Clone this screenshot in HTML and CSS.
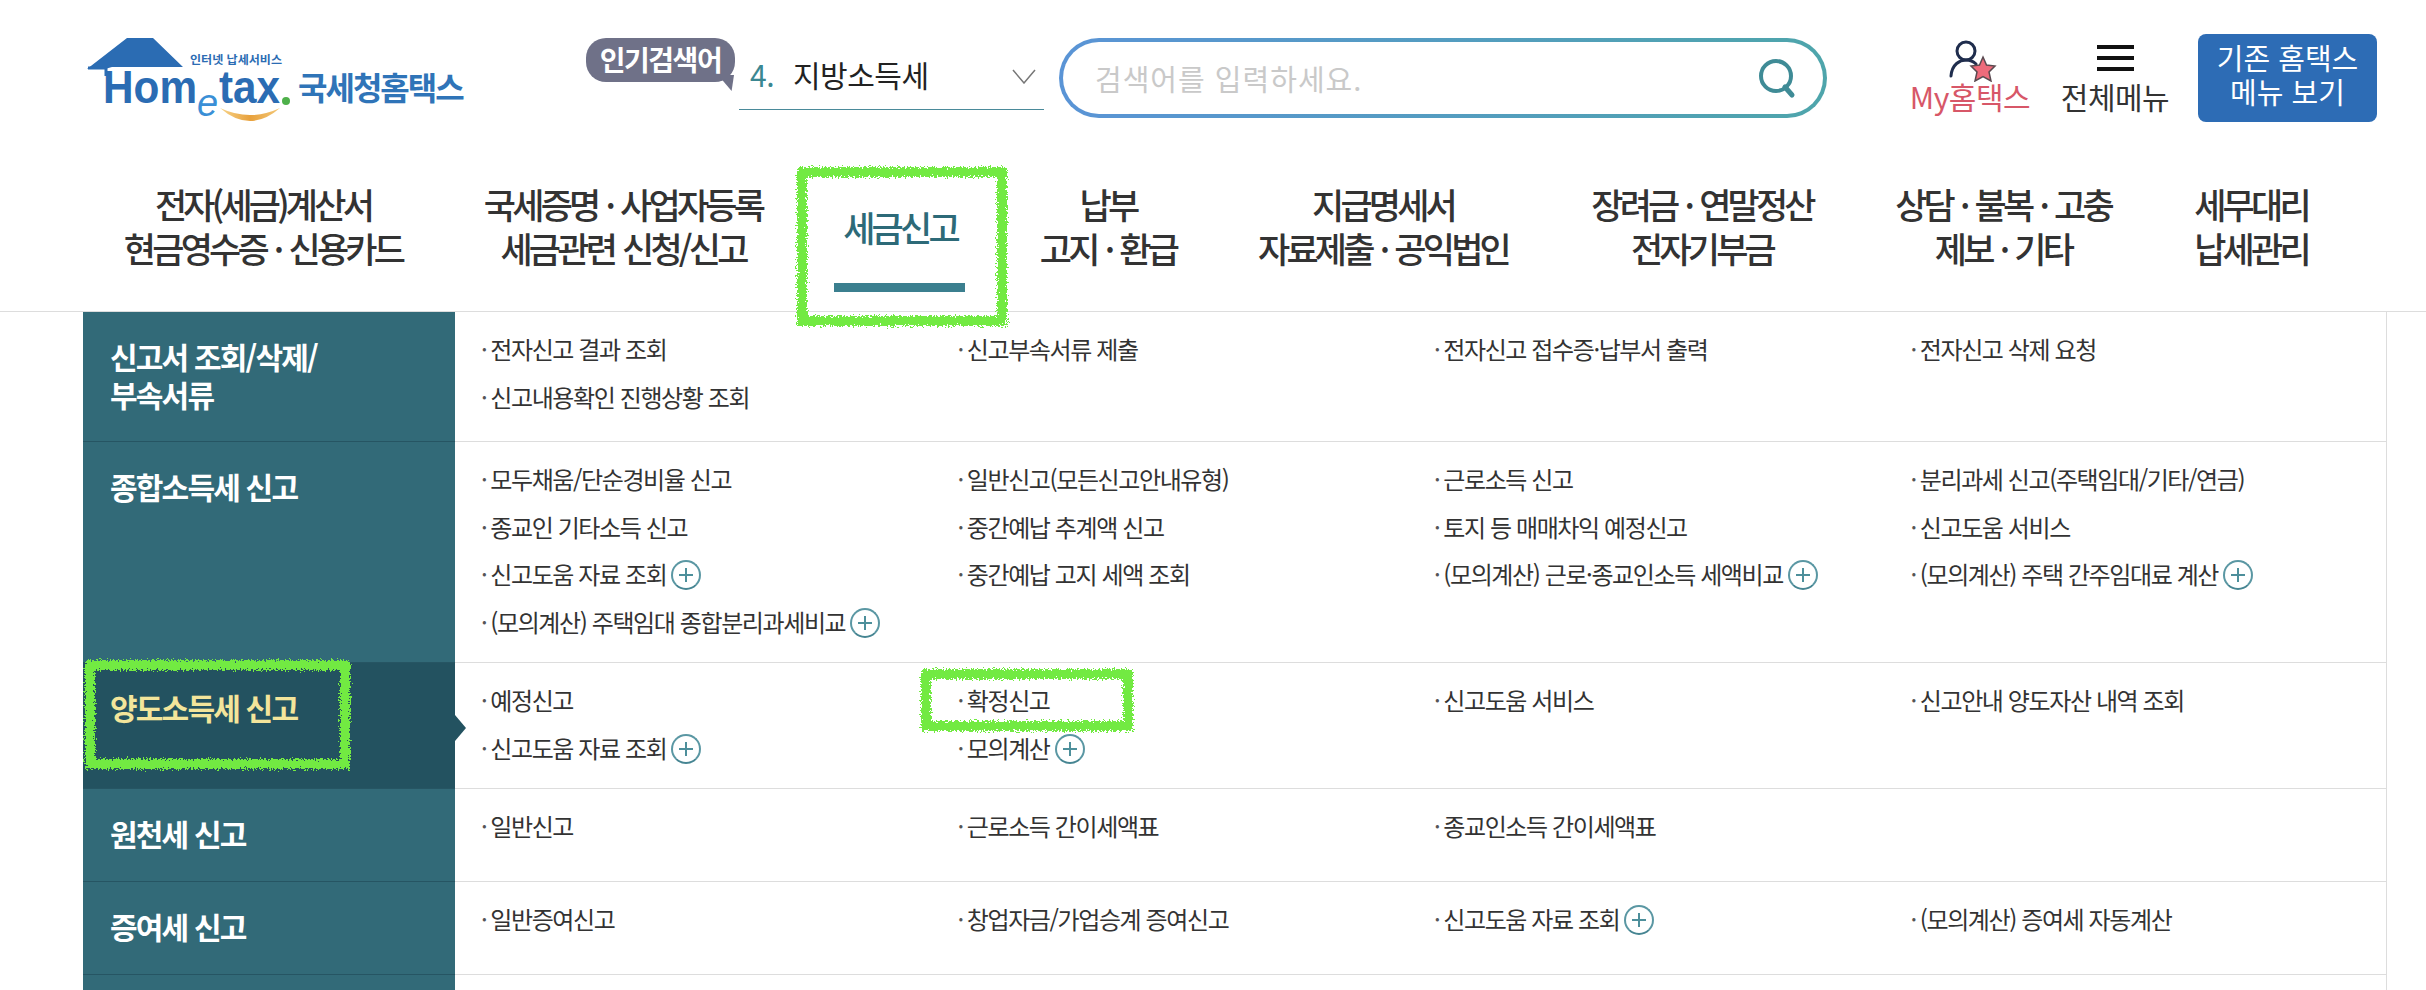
FILE: index.html
```html
<!DOCTYPE html>
<html lang="ko">
<head>
    <meta charset="UTF-8">
    <title>국세청홈택스 - 세금신고</title>
    <link rel="stylesheet" href="styles.css">
</head>
<body>
    <svg class="defs" width="0" height="0">
        <filter id="rough" x="-10%" y="-10%" width="120%" height="120%">
            <feTurbulence type="fractalNoise" baseFrequency="0.6" numOctaves="2" seed="4"/>
            <feDisplacementMap in="SourceGraphic" scale="9"/>
        </filter>
        <linearGradient id="smile" x1="0" y1="0" x2="1" y2="0">
            <stop offset="0" stop-color="#f7d48a"/>
            <stop offset="0.5" stop-color="#e8a13c"/>
            <stop offset="1" stop-color="#f3c878"/>
        </linearGradient>
    </svg>

    <header class="top">
        <a class="logo">
            <svg width="385" height="100" viewBox="85 30 385 100">
                <path d="M87 69 L127 38 H153 L183 67 H112 L105 69 Z" fill="#2b6cb3"/>
                <path d="M88 68 H106 V76" fill="none" stroke="#2b6cb3" stroke-width="3"/>
                <text class="logo-small" x="190" y="64" textLength="92" lengthAdjust="spacingAndGlyphs">인터넷 납세서비스</text>
                <text class="logo-word" x="103" y="103" textLength="94" lengthAdjust="spacingAndGlyphs">Hom</text>
                <text class="logo-e" x="197" y="116">e</text>
                <text class="logo-word" x="219" y="103" textLength="61" lengthAdjust="spacingAndGlyphs">tax</text>
                <circle cx="286" cy="101" r="4" fill="#4eb04a"/>
                <path d="M220 108 Q250 134 280 108 Q250 122 220 108 Z" fill="url(#smile)"/>
                <text class="logo-name" x="298" y="100">국세청홈택스</text>
            </svg>
        </a>
        <div class="tag">인기검색어</div>
        <div class="rank">
            <span class="rank-no">4.</span>
            <span class="rank-word">지방소득세</span>
            <svg class="rank-arrow" width="24" height="15" viewBox="0 0 24 15"><path d="M1 1 L12 14 L23 1" fill="none" stroke="#777" stroke-width="1.500"/></svg>
        </div>
        <div class="search">
            <span class="search-text">검색어를 입력하세요.</span>
            <svg width="44" height="44" viewBox="0 0 44 44">
                <circle cx="21" cy="20" r="15" fill="none" stroke="#3f8b96" stroke-width="4"/>
                <path d="M30 31 L37 39" stroke="#3f8b96" stroke-width="5" stroke-linecap="round"/>
            </svg>
        </div>
        <a class="util util-my">
            <svg width="50" height="44" viewBox="0 0 50 44">
                <circle cx="18" cy="13" r="9" fill="none" stroke="#1f2d4d" stroke-width="3"/>
                <path d="M3 38 C4 26 12 22 18 22 C22 22 26 24 28 26" fill="none" stroke="#1f2d4d" stroke-width="3" stroke-linecap="round"/>
                <path d="M35 19 L38.500 27 L47 28 L41 34 L43 43 L35 38.500 L27 43 L29 34 L23 28 L31.500 27 Z" fill="#ee6b7b" stroke="#5a4a50" stroke-width="1.500"/>
            </svg>
            <span>My홈택스</span>
        </a>
        <a class="util util-menu">
            <span class="burger"></span>
            <span>전체메뉴</span>
        </a>
        <a class="old-btn">기존 홈택스<br>메뉴 보기</a>
    </header>

    <nav class="gnb">
        <a class="w360">전자(세금)계산서<br>현금영수증 · 신용카드</a>
        <a class="w360">국세증명 · 사업자등록<br>세금관련 신청/신고</a>
        <a class="w194 on">세금신고<i class="mark mark-nav"></i></a>
        <a class="w222">납부<br>고지 · 환급</a>
        <a class="w328">지급명세서<br>자료제출 · 공익법인</a>
        <a class="w310">장려금 · 연말정산<br>전자기부금</a>
        <a class="w292">상담 · 불복 · 고충<br>제보 · 기타</a>
        <a class="w204">세무대리<br>납세관리</a>
    </nav>

    <main class="board">
        <section class="row row-first">
            <h3 class="side">신고서 조회/삭제/<br>부속서류</h3>
            <ul class="links">
                <li>전자신고 결과 조회</li>
                <li>신고부속서류 제출</li>
                <li>전자신고 접수증·납부서 출력</li>
                <li>전자신고 삭제 요청</li>
                <li>신고내용확인 진행상황 조회</li>
            </ul>
        </section>
        <section class="row">
            <h3 class="side">종합소득세 신고</h3>
            <ul class="links">
                <li>모두채움/단순경비율 신고</li>
                <li>일반신고(모든신고안내유형)</li>
                <li>근로소득 신고</li>
                <li>분리과세 신고(주택임대/기타/연금)</li>
                <li>종교인 기타소득 신고</li>
                <li>중간예납 추계액 신고</li>
                <li>토지 등 매매차익 예정신고</li>
                <li>신고도움 서비스</li>
                <li>신고도움 자료 조회<i class="plus"></i></li>
                <li>중간예납 고지 세액 조회</li>
                <li>(모의계산) 근로·종교인소득 세액비교<i class="plus"></i></li>
                <li>(모의계산) 주택 간주임대료 계산<i class="plus"></i></li>
                <li>(모의계산) 주택임대 종합분리과세비교<i class="plus"></i></li>
            </ul>
        </section>
        <section class="row row-on">
            <h3 class="side">양도소득세 신고<i class="mark mark-side"></i></h3>
            <ul class="links">
                <li>예정신고</li>
                <li>확정신고<i class="mark mark-link"></i></li>
                <li>신고도움 서비스</li>
                <li>신고안내 양도자산 내역 조회</li>
                <li>신고도움 자료 조회<i class="plus"></i></li>
                <li>모의계산<i class="plus"></i></li>
            </ul>
        </section>
        <section class="row">
            <h3 class="side">원천세 신고</h3>
            <ul class="links">
                <li>일반신고</li>
                <li>근로소득 간이세액표</li>
                <li>종교인소득 간이세액표</li>
            </ul>
        </section>
        <section class="row">
            <h3 class="side">증여세 신고</h3>
            <ul class="links">
                <li>일반증여신고</li>
                <li>창업자금/가업승계 증여신고</li>
                <li>신고도움 자료 조회<i class="plus"></i></li>
                <li>(모의계산) 증여세 자동계산</li>
            </ul>
        </section>
        <section class="row">
            <h3 class="side"></h3>
            <ul class="links"></ul>
        </section>
    </main>
</body>
</html>
```

FILE: styles.css
```css
html, body {
    margin: 0;
    height: 990px;
    overflow: hidden;
    background: #fff;
}

body {
    font-family: "Noto Sans CJK KR", "Noto Sans", sans-serif;
    color: #333;
}

.defs {
    position: absolute;
}

/* 상단 */
.top {
    display: flex;
    align-items: flex-start;
    height: 130px;
    padding-left: 85px;
    box-sizing: border-box;
}

.logo {
    display: block;
    width: 385px;
    height: 100px;
    margin-top: 30px;
}

.logo-small {
    font-size: 11px;
    font-weight: 700;
    fill: #2b6cb3;
}

.logo-word {
    font-family: "Liberation Sans", sans-serif;
    font-size: 47px;
    font-weight: 700;
    fill: #2b6cb3;
}

.logo-e {
    font-family: "Liberation Sans", sans-serif;
    font-size: 38px;
    font-style: italic;
    fill: #3a8fd6;
}

.logo-name {
    font-size: 32px;
    font-weight: 700;
    letter-spacing: -2px;
    fill: #2f74b8;
}

.tag {
    position: relative;
    width: 149px;
    height: 44px;
    margin: 38px 0 0 116px;
    border-radius: 20px;
    background: #6f7188;
    color: #fff;
    font-size: 28px;
    font-weight: 700;
    line-height: 42px;
    letter-spacing: -1.500px;
    text-align: center;
}

.tag::after {
    content: "";
    position: absolute;
    right: 1px;
    bottom: -9px;
    width: 16px;
    height: 16px;
    background: #6f7188;
    clip-path: polygon(0 0, 100% 0, 85% 100%);
}

.rank {
    display: flex;
    align-items: center;
    width: 305px;
    height: 72px;
    margin: 38px 0 0 4px;
    padding: 0 8px 0 11px;
    box-sizing: border-box;
    border-bottom: 1px solid #4a8a9a;
    font-size: 30px;
    letter-spacing: -0.500px;
}

.rank-no {
    width: 43px;
    color: #3b8791;
}

.rank-word {
    flex: 1;
    color: #222;
}

.rank-arrow {
    margin-top: 6px;
}

.search {
    display: flex;
    align-items: center;
    justify-content: space-between;
    width: 768px;
    height: 80px;
    margin: 38px 0 0 15px;
    padding: 0 24px 0 32px;
    box-sizing: border-box;
    border: 4px solid transparent;
    border-radius: 40px;
    background: linear-gradient(#fff, #fff) padding-box, linear-gradient(90deg, #5a94d6, #4ea5ab) border-box;
}

.search-text {
    color: #c9c9c9;
    font-size: 29px;
    letter-spacing: 1px;
}

.util {
    display: flex;
    flex-direction: column;
    align-items: center;
    font-size: 30px;
    line-height: 36px;
    letter-spacing: -0.500px;
}

.util-my {
    width: 130px;
    margin: 38px 0 0 78px;
    color: #d75768;
}

.util-my svg {
    margin: 0 -6px -4px 0;
}

.util-menu {
    width: 120px;
    margin: 38px 0 0 20px;
    color: #333;
}

.burger {
    display: block;
    box-sizing: border-box;
    width: 37px;
    height: 26px;
    margin: 7px 0 7px;
    border-top: 4px solid #111;
    border-bottom: 4px solid #111;
    background: linear-gradient(#111, #111) center / 100% 4px no-repeat;
}

.old-btn {
    width: 179px;
    height: 88px;
    margin: 34px 0 0 23px;
    padding-top: 6px;
    box-sizing: border-box;
    border-radius: 8px;
    background: #2d6cb5;
    color: #fff;
    font-size: 29px;
    line-height: 34px;
    text-align: center;
}

/* 메뉴 */
.gnb {
    position: relative;
    display: flex;
    height: 182px;
    padding: 0 0 0 83px;
    box-sizing: border-box;
    border-bottom: 1px solid #ddd;
    z-index: 2;
}

.gnb a {
    position: relative;
    display: block;
    padding-top: 52px;
    box-sizing: border-box;
    font-size: 35px;
    font-weight: 500;
    line-height: 44px;
    letter-spacing: -3.800px;
    word-spacing: 2px;
    text-align: center;
    white-space: nowrap;
}

.w360 { width: 360px; }
.w194 { width: 194px; }
.w222 { width: 222px; }
.w328 { width: 328px; }
.w310 { width: 310px; }
.w292 { width: 292px; }
.w204 { width: 204px; }

.gnb a.on {
    padding-top: 75px;
    color: #2d6a78;
}

.gnb a.on::after {
    content: "";
    position: absolute;
    left: 31px;
    top: 153px;
    width: 131px;
    height: 9px;
    background: #3b7f8f;
}

/* 녹색 표시 */
.mark {
    position: absolute;
    box-sizing: border-box;
    border: 10px solid #72ea42;
    filter: url(#rough);
    z-index: 3;
}

.mark-nav {
    left: -6px;
    top: 37px;
    width: 210px;
    height: 159px;
}

.mark-side {
    left: 2px;
    top: -3px;
    width: 265px;
    height: 109px;
}

.mark-link {
    left: -37px;
    top: -7px;
    width: 212px;
    height: 62px;
}

/* 목록 */
.board {
    width: 2303px;
    margin-left: 83px;
    border-right: 1px solid #ddd;
}

.row {
    display: flex;
}

.side {
    position: relative;
    flex: none;
    width: 372px;
    margin: 0;
    padding: 25px 0 17px 27px;
    box-sizing: border-box;
    border-bottom: 1px solid #265563;
    background: #326a78;
    color: #fff;
    font-size: 30px;
    font-weight: 700;
    line-height: 38px;
    letter-spacing: -1.800px;
}

.row-on .side {
    background: #235260;
    color: #f3e59b;
}

.row-on .side::after {
    content: "";
    position: absolute;
    right: -11px;
    top: 52px;
    width: 11px;
    height: 26px;
    background: #235260;
    clip-path: polygon(0 0, 100% 50%, 0 100%);
}

.links {
    display: grid;
    flex: 1;
    grid-template-columns: repeat(4, 476.500px);
    grid-auto-rows: 47.500px;
    align-content: start;
    margin: 0;
    padding: 13px 0 17px 26px;
    min-height: 93px;
    box-sizing: border-box;
    border-bottom: 1px solid #ddd;
    list-style: none;
    font-size: 24px;
    letter-spacing: -1.400px;
}

.row-first .links {
    padding-bottom: 21px;
}

.links li {
    position: relative;
    display: flex;
    align-items: center;
    line-height: 47px;
    white-space: nowrap;
}

.links li::before {
    content: "·";
    margin-right: 4px;
    color: #555;
}

.plus {
    position: relative;
    display: block;
    flex: none;
    width: 30px;
    height: 30px;
    margin: 3px 0 0 5px;
    box-sizing: border-box;
    border: 2px solid #5a97a3;
    border-bottom-color: #468592;
    border-radius: 50%;
    background:
        linear-gradient(#4d8f9b, #4d8f9b) center / 14px 2px no-repeat,
        linear-gradient(#4d8f9b, #4d8f9b) center / 2px 14px no-repeat;
}
```
